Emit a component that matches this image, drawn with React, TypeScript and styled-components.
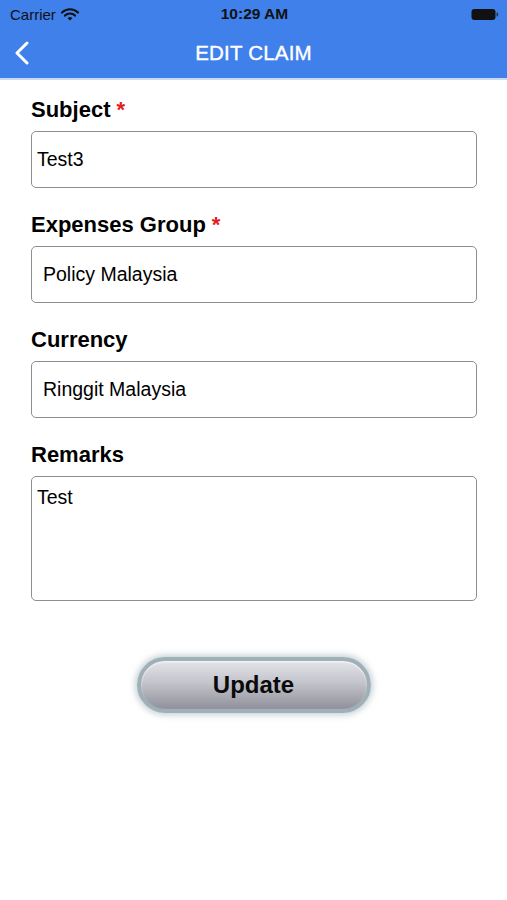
import React from 'react';
import styled, { createGlobalStyle } from 'styled-components';

const GlobalStyle = createGlobalStyle`
  html, body {
    margin: 0;
    padding: 0;
    background: #ffffff;
    font-family: 'Liberation Sans', Arial, sans-serif;
  }
`;

const Screen = styled.div`
  width: 507px;
  height: 900px;
  background: #ffffff;
  display: flex;
  flex-direction: column;
`;

const Header = styled.header`
  background: #3f80ea;
  border-bottom: 2px solid #c9daf6;
`;

const StatusBar = styled.div`
  height: 28px;
  display: grid;
  grid-template-columns: 1fr auto 1fr;
  align-items: center;
  padding: 0 8px 0 10px;
  color: #111;
  font-family: 'Liberation Sans', Arial, sans-serif;
  font-size: 15px;
`;

const Carrier = styled.div`
  display: flex;
  align-items: center;
  gap: 5px;
`;

const Time = styled.div`
  font-weight: 700;
  font-size: 15.5px;
`;

const Battery = styled.div`
  justify-self: end;
  display: flex;
  align-items: center;
`;

const NavBar = styled.div`
  height: 50px;
  display: grid;
  grid-template-columns: 60px 1fr 60px;
  align-items: center;
`;

const BackButton = styled.button`
  background: none;
  border: none;
  padding: 0 0 0 14px;
  display: flex;
  align-items: center;
  cursor: pointer;
`;

const Title = styled.h1`
  margin: 0;
  text-align: center;
  color: #ffffff;
  font-family: 'Liberation Sans', Arial, sans-serif;
  font-size: 20.5px;
  font-weight: 400;
  letter-spacing: 0.2px;
  -webkit-text-stroke: 0.4px #ffffff;
`;

const Form = styled.div`
  padding: 17px 30px 0 31px;
  display: flex;
  flex-direction: column;
  gap: 24px;
`;

const Field = styled.div`
  display: flex;
  flex-direction: column;
  gap: 8px;
`;

const Label = styled.label`
  font-family: 'Liberation Sans', Arial, sans-serif;
  font-weight: 700;
  font-size: 22px;
  color: #000;
  line-height: 26px;
`;

const Required = styled.span`
  color: #e0201c;
  margin-left: 6px;
`;

const Box = styled.div<{ $tall?: boolean; $inset?: number }>`
  height: ${p => (p.$tall ? '125px' : '57px')};
  box-sizing: border-box;
  border: 1.5px solid #8e8e8e;
  border-radius: 5px;
  padding: ${p => (p.$tall ? '9px' : '0')} 8px 0 ${p => p.$inset ?? 5}px;
  display: flex;
  align-items: ${p => (p.$tall ? 'flex-start' : 'center')};
  font-family: 'Liberation Sans', Arial, sans-serif;
  font-size: 19.5px;
  color: #000;
`;

const ButtonRow = styled.div`
  display: flex;
  justify-content: center;
  padding: 56px 0 0 0;
`;

const UpdateButton = styled.button`
  width: 234px;
  height: 56px;
  border-radius: 28px;
  border: 4px solid #9fb0b8;
  background: linear-gradient(to bottom, #e4e5ea 0%, #c3c4cc 45%, #8f9099 100%);
  box-shadow: 0 0 6px 2px rgba(150, 170, 180, 0.55), inset 0 1px 2px rgba(255, 255, 255, 0.8);
  font-family: 'Liberation Sans', Arial, sans-serif;
  font-weight: 700;
  font-size: 24px;
  color: #0a0a0a;
  cursor: pointer;
`;

const fields = [
  { label: 'Subject', value: 'Test3', required: true, inset: 5 },
  { label: 'Expenses Group', value: 'Policy Malaysia', required: true, inset: 11 },
  { label: 'Currency', value: 'Ringgit Malaysia', required: false, inset: 11 },
];

const App: React.FC = () => {
  return (
    <>
      <GlobalStyle />
      <Screen>
        <Header>
          <StatusBar>
            <Carrier>
              Carrier
              <svg width="18" height="13" viewBox="0 0 18 13">
                <path d="M1 4.5a11.5 11.5 0 0 1 16 0" stroke="#111" strokeWidth="2.2" fill="none" strokeLinecap="round" />
                <path d="M4 7.6a7 7 0 0 1 10 0" stroke="#111" strokeWidth="2.2" fill="none" strokeLinecap="round" />
                <path d="M6.6 10.3L9 12.6l2.4-2.3a3.4 3.4 0 0 0-4.8 0z" fill="#111" />
              </svg>
            </Carrier>
            <Time>10:29 AM</Time>
            <Battery>
              <svg width="28" height="13" viewBox="0 0 28 13">
                <rect x="0.5" y="1" width="24" height="11" rx="3" fill="#111" />
                <rect x="25.5" y="4.5" width="1.6" height="4" rx="0.8" fill="#333" />
              </svg>
            </Battery>
          </StatusBar>
          <NavBar>
            <BackButton aria-label="Back">
              <svg width="16" height="24" viewBox="0 0 16 24">
                <path d="M13 2L3 12l10 10" stroke="#fff" strokeWidth="3" fill="none" strokeLinecap="round" strokeLinejoin="round" />
              </svg>
            </BackButton>
            <Title>EDIT CLAIM</Title>
            <div />
          </NavBar>
        </Header>
        <Form>
          {fields.map(f => (
            <Field key={f.label}>
              <Label>
                {f.label}
                {f.required && <Required>*</Required>}
              </Label>
              <Box $inset={f.inset}>{f.value}</Box>
            </Field>
          ))}
          <Field>
            <Label>Remarks</Label>
            <Box $tall>Test</Box>
          </Field>
        </Form>
        <ButtonRow>
          <UpdateButton>Update</UpdateButton>
        </ButtonRow>
      </Screen>
    </>
  );
};

export default App;
